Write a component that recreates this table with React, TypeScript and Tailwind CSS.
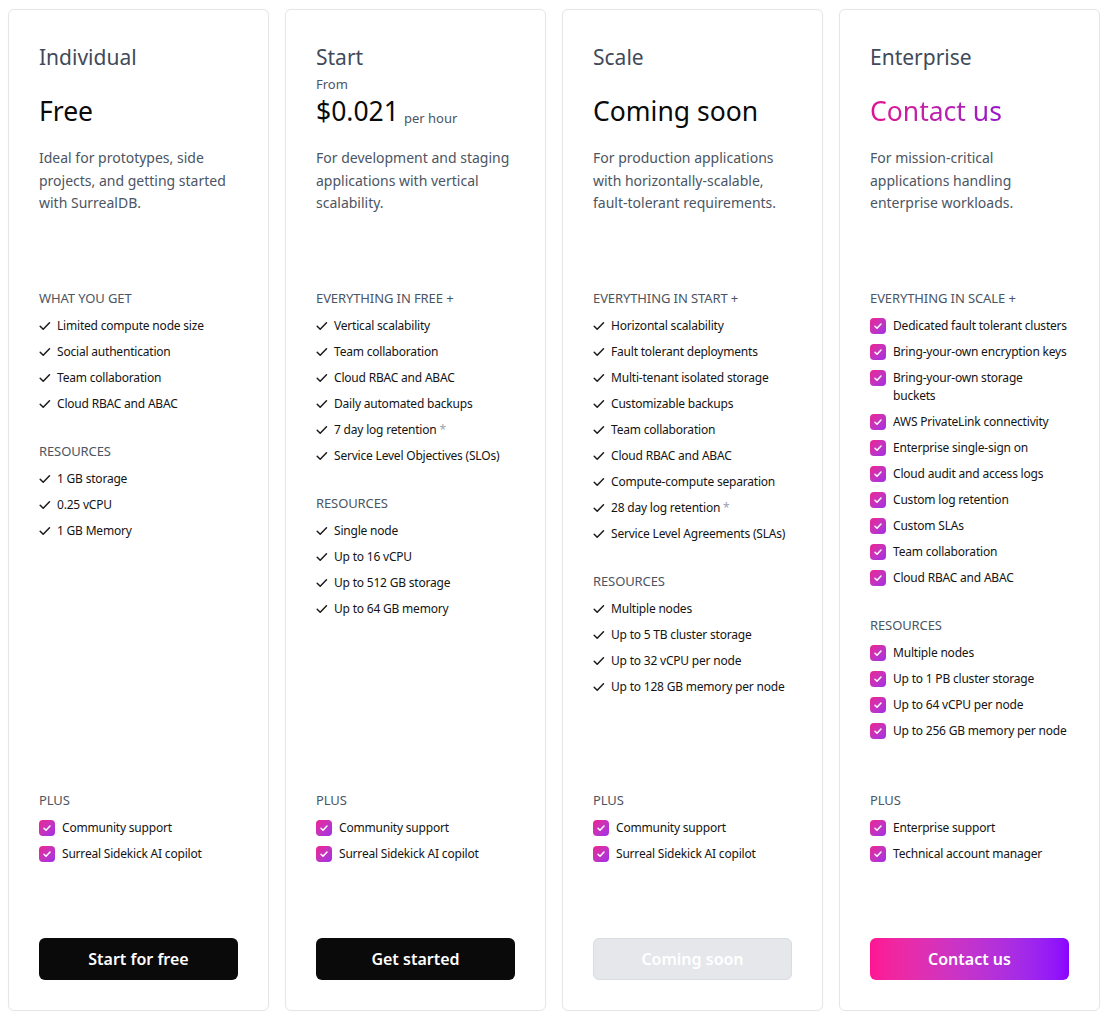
import React from 'react';

type Section = { title: string; items: string[] };

type Plan = {
  name: string;
  from?: boolean;
  price: string;
  unit?: string;
  gradientPrice?: boolean;
  description: string;
  sections: Section[];
  plus: string[];
  boxed: boolean; // gradient checkbox for all features
  cta: string;
  ctaStyle: 'dark' | 'disabled' | 'gradient';
};

const PLANS: Plan[] = [
  {
    name: 'Individual',
    price: 'Free',
    description: 'Ideal for prototypes, side projects, and getting started with SurrealDB.',
    sections: [
      {
        title: 'What you get',
        items: ['Limited compute node size', 'Social authentication', 'Team collaboration', 'Cloud RBAC and ABAC'],
      },
      { title: 'Resources', items: ['1 GB storage', '0.25 vCPU', '1 GB Memory'] },
    ],
    plus: ['Community support', 'Surreal Sidekick AI copilot'],
    boxed: false,
    cta: 'Start for free',
    ctaStyle: 'dark',
  },
  {
    name: 'Start',
    from: true,
    price: '$0.021',
    unit: 'per hour',
    description: 'For development and staging applications with vertical scalability.',
    sections: [
      {
        title: 'Everything in Free +',
        items: [
          'Vertical scalability',
          'Team collaboration',
          'Cloud RBAC and ABAC',
          'Daily automated backups',
          '7 day log retention *',
          'Service Level Objectives (SLOs)',
        ],
      },
      { title: 'Resources', items: ['Single node', 'Up to 16 vCPU', 'Up to 512 GB storage', 'Up to 64 GB memory'] },
    ],
    plus: ['Community support', 'Surreal Sidekick AI copilot'],
    boxed: false,
    cta: 'Get started',
    ctaStyle: 'dark',
  },
  {
    name: 'Scale',
    price: 'Coming soon',
    description: 'For production applications with horizontally-scalable, fault-tolerant requirements.',
    sections: [
      {
        title: 'Everything in Start +',
        items: [
          'Horizontal scalability',
          'Fault tolerant deployments',
          'Multi-tenant isolated storage',
          'Customizable backups',
          'Team collaboration',
          'Cloud RBAC and ABAC',
          'Compute-compute separation',
          '28 day log retention *',
          'Service Level Agreements (SLAs)',
        ],
      },
      {
        title: 'Resources',
        items: ['Multiple nodes', 'Up to 5 TB cluster storage', 'Up to 32 vCPU per node', 'Up to 128 GB memory per node'],
      },
    ],
    plus: ['Community support', 'Surreal Sidekick AI copilot'],
    boxed: false,
    cta: 'Coming soon',
    ctaStyle: 'disabled',
  },
  {
    name: 'Enterprise',
    price: 'Contact us',
    gradientPrice: true,
    description: 'For mission-critical applications handling enterprise workloads.',
    sections: [
      {
        title: 'Everything in Scale +',
        items: [
          'Dedicated fault tolerant clusters',
          'Bring-your-own encryption keys',
          'Bring-your-own storage\nbuckets',
          'AWS PrivateLink connectivity',
          'Enterprise single-sign on',
          'Cloud audit and access logs',
          'Custom log retention',
          'Custom SLAs',
          'Team collaboration',
          'Cloud RBAC and ABAC',
        ],
      },
      {
        title: 'Resources',
        items: ['Multiple nodes', 'Up to 1 PB cluster storage', 'Up to 64 vCPU per node', 'Up to 256 GB memory per node'],
      },
    ],
    plus: ['Enterprise support', 'Technical account manager'],
    boxed: true,
    cta: 'Contact us',
    ctaStyle: 'gradient',
  },
];

function PlainCheck() {
  return (
    <svg width="12" height="18" viewBox="0 0 12 18" className="shrink-0" fill="none">
      <path d="M1.2 9.2l3 3 6.3-6.4" stroke="#1a1a1a" strokeWidth="1.5" strokeLinecap="round" strokeLinejoin="round" />
    </svg>
  );
}

function BoxCheck() {
  return (
    <span className="mt-[1px] flex h-4 w-4 shrink-0 items-center justify-center rounded-[4px] bg-gradient-to-br from-[#ee1a90] to-[#a02ae8]">
      <svg width="10" height="10" viewBox="0 0 10 10" fill="none">
        <path d="M2 5.2l2 2 4-4.2" stroke="#fff" strokeWidth="1.5" strokeLinecap="round" strokeLinejoin="round" />
      </svg>
    </span>
  );
}

function Feature({ text, boxed }: { text: string; boxed: boolean }) {
  // "*" suffix shown in grey
  const star = text.endsWith(' *');
  const label = star ? text.slice(0, -2) : text;
  const lines = label.split('\n');
  return (
    <li className={`flex items-start ${boxed ? 'gap-[7px]' : 'gap-[6px]'}`}>
      {boxed ? <BoxCheck /> : <PlainCheck />}
      <span className="text-[12px] leading-[18px] tracking-[-0.2px] text-[#141414]">
        {lines.map((l, i) => (
          <React.Fragment key={i}>
            {i > 0 && <br />}
            {l}
          </React.Fragment>
        ))}
        {star && <span className="text-[#9ca3af]"> *</span>}
      </span>
    </li>
  );
}

function FeatureGroup({ title, items, boxed }: { title: string; items: string[]; boxed: boolean }) {
  return (
    <div>
      <div className="text-[13px] uppercase leading-5 tracking-[-0.1px] text-[#4b5563]">{title}</div>
      <ul className="mt-[9px] space-y-2">
        {items.map((t) => (
          <Feature key={t} text={t} boxed={boxed} />
        ))}
      </ul>
    </div>
  );
}

function PlanCard({ plan }: { plan: Plan }) {
  const ctaClass =
    plan.ctaStyle === 'dark'
      ? 'bg-[#0a0a0a] text-white'
      : plan.ctaStyle === 'disabled'
        ? 'bg-[#e5e7eb] text-white border border-[#d9dce0]'
        : 'bg-gradient-to-r from-[#ff1493] to-[#8b00ff] text-white';

  return (
    <div className="flex h-[1002px] flex-col rounded-[6px] border border-[#e6e6e9] bg-white px-[30px] pb-[30px] pt-[32px] shadow-[0_0_2px_rgba(0,0,0,0.04)]">
      <div className="h-[246px]">
        <div className="text-[21px] leading-[30px] text-[#3f4a5a]">{plan.name}</div>
        <div className="mt-[2px] h-5 text-[13px] leading-5 text-[#4b5563]">{plan.from ? 'From' : ''}</div>
        <div className="flex h-[34px] items-baseline leading-[34px]">
          <span
            className={`text-[26.5px] ${
              plan.gradientPrice
                ? 'bg-gradient-to-r from-[#e0108f] to-[#9a12c8] bg-clip-text text-transparent'
                : 'text-[#0a0a0a]'
            }`}
          >
            {plan.price}
          </span>
          {plan.unit && <span className="ml-[5px] translate-y-[2px] text-[13px] text-[#4b5563]">{plan.unit}</span>}
        </div>
        <p className="mt-[19px] text-[14px] leading-[22.5px] text-[#4b5563]">{plan.description}</p>
      </div>

      <div className="flex flex-col gap-[28px]">
        {plan.sections.map((s) => (
          <FeatureGroup key={s.title} title={s.title} items={s.items} boxed={plan.boxed} />
        ))}
      </div>

      <div className="mt-auto">
        <FeatureGroup title="Plus" items={plan.plus} boxed />
        <button className={`mt-[75px] h-[42px] w-full rounded-[6px] text-[16px] font-semibold ${ctaClass}`}>
          {plan.cta}
        </button>
      </div>
    </div>
  );
}

export default function App() {
  return (
    <div
      className="grid min-h-screen grid-cols-4 gap-4 bg-white p-2 pt-[9px]"
      style={{ fontFamily: '"Noto Sans", "Open Sans", sans-serif' }}
    >
      {PLANS.map((p) => (
        <PlanCard key={p.name} plan={p} />
      ))}
    </div>
  );
}
